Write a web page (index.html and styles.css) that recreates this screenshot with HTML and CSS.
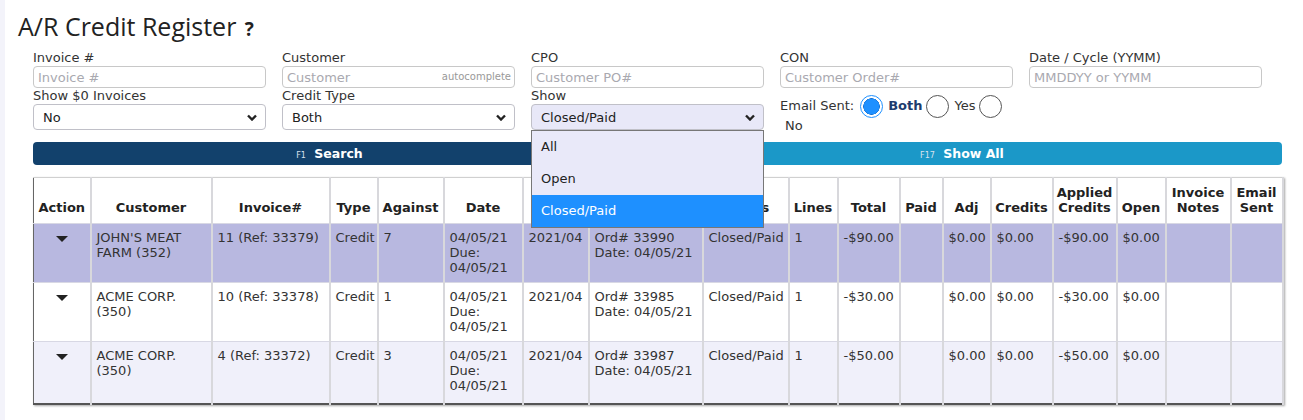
FILE: index.html
```html
<!DOCTYPE html>
<html lang="en">
<head>
    <meta charset="UTF-8">
    <title>A/R Credit Register</title>
    <link rel="stylesheet" href="styles.css">
</head>
<body>
    <div class="page">
        <h1 class="title">A/R Credit Register <span class="help">?</span></h1>

        <!-- filters -->
        <div class="filters">
            <div class="field">
                <label>Invoice #</label>
                <input class="input" placeholder="Invoice #">
            </div>
            <div class="field">
                <label>Customer</label>
                <div class="input-wrap">
                    <input class="input" placeholder="Customer">
                    <span class="hint">autocomplete</span>
                </div>
            </div>
            <div class="field">
                <label>CPO</label>
                <input class="input" placeholder="Customer PO#">
            </div>
            <div class="field">
                <label>CON</label>
                <input class="input" placeholder="Customer Order#">
            </div>
            <div class="field">
                <label>Date / Cycle (YYMM)</label>
                <input class="input" placeholder="MMDDYY or YYMM">
            </div>

            <div class="field">
                <label>Show $0 Invoices</label>
                <div class="select"><span>No</span><svg class="chev" viewBox="0 0 10 7"><path d="M1 1.5 L5 5.5 L9 1.5"/></svg></div>
            </div>
            <div class="field">
                <label>Credit Type</label>
                <div class="select"><span>Both</span><svg class="chev" viewBox="0 0 10 7"><path d="M1 1.5 L5 5.5 L9 1.5"/></svg></div>
            </div>
            <div class="field">
                <label>Show</label>
                <div class="select-wrap">
                    <div class="select active"><span>Closed/Paid</span><svg class="chev" viewBox="0 0 10 7"><path d="M1 1.5 L5 5.5 L9 1.5"/></svg></div>
                    <ul class="options">
                        <li>All</li>
                        <li>Open</li>
                        <li class="picked">Closed/Paid</li>
                    </ul>
                </div>
            </div>
            <div class="field email">
                <span class="email-label">Email Sent:</span><span class="radio on"></span><span class="opt bold">Both</span><span class="radio"></span><span class="opt">Yes</span><span class="radio"></span> <span class="opt">No</span>
            </div>
        </div>

        <div class="buttons">
            <button class="btn search"><small>F1</small> Search</button>
            <button class="btn showall"><small>F17</small> Show All</button>
        </div>

        <!-- results -->
        <table class="grid">
            <colgroup>
                <col class="w57"><col class="w121"><col class="w118"><col class="w48"><col class="w66"><col class="w79"><col class="w66"><col class="w114"><col class="w86">
                <col class="w49"><col class="w62"><col class="w43"><col class="w48"><col class="w62"><col class="w64"><col class="w49"><col class="w65"><col class="w52">
            </colgroup>
            <thead>
                <tr>
                    <th>Action</th><th>Customer</th><th>Invoice#</th><th>Type</th><th>Against</th><th>Date</th><th>Cycle</th><th>Order</th><th>Status</th>
                    <th>Lines</th><th>Total</th><th>Paid</th><th>Adj</th><th>Credits</th><th>Applied<br>Credits</th><th>Open</th><th>Invoice<br>Notes</th><th>Email<br>Sent</th>
                </tr>
            </thead>
            <tbody>
                <tr class="row-hl">
                    <td class="act"><span class="caret"></span></td>
                    <td>JOHN'S MEAT<br>FARM (352)</td>
                    <td>11 (Ref: 33379)</td>
                    <td>Credit</td>
                    <td>7</td>
                    <td>04/05/21<br>Due:<br>04/05/21</td>
                    <td>2021/04</td>
                    <td>Ord# 33990<br>Date: 04/05/21</td>
                    <td>Closed/Paid</td>
                    <td>1</td>
                    <td>-$90.00</td>
                    <td></td>
                    <td>$0.00</td>
                    <td>$0.00</td>
                    <td>-$90.00</td>
                    <td>$0.00</td>
                    <td></td>
                    <td></td>
                </tr>
                <tr>
                    <td class="act"><span class="caret"></span></td>
                    <td>ACME CORP.<br>(350)</td>
                    <td>10 (Ref: 33378)</td>
                    <td>Credit</td>
                    <td>1</td>
                    <td>04/05/21<br>Due:<br>04/05/21</td>
                    <td>2021/04</td>
                    <td>Ord# 33985<br>Date: 04/05/21</td>
                    <td>Closed/Paid</td>
                    <td>1</td>
                    <td>-$30.00</td>
                    <td></td>
                    <td>$0.00</td>
                    <td>$0.00</td>
                    <td>-$30.00</td>
                    <td>$0.00</td>
                    <td></td>
                    <td></td>
                </tr>
                <tr class="row-alt">
                    <td class="act"><span class="caret"></span></td>
                    <td>ACME CORP.<br>(350)</td>
                    <td>4 (Ref: 33372)</td>
                    <td>Credit</td>
                    <td>3</td>
                    <td>04/05/21<br>Due:<br>04/05/21</td>
                    <td>2021/04</td>
                    <td>Ord# 33987<br>Date: 04/05/21</td>
                    <td>Closed/Paid</td>
                    <td>1</td>
                    <td>-$50.00</td>
                    <td></td>
                    <td>$0.00</td>
                    <td>$0.00</td>
                    <td>-$50.00</td>
                    <td>$0.00</td>
                    <td></td>
                    <td></td>
                </tr>
            </tbody>
        </table>
    </div>
</body>
</html>
```

FILE: styles.css
```css
body {
    margin: 0;
    background: #f3f3fa;
    font-family: "DejaVu Sans", Verdana, sans-serif;
    font-size: 13px;
    color: #333;
}
.page {
    margin-left: 5px;
    background: #fff;
    min-height: 420px;
    padding: 11px 0 0 13px;
    box-sizing: border-box;
}
.title {
    font-family: "Open Sans", "Noto Sans", sans-serif;
    font-weight: 400;
    font-size: 25px;
    line-height: 31px;
    margin: 0 0 5px 0;
    color: #222;
}
.help {
    font-size: 19px;
    font-weight: 700;
    margin-left: 2px;
}

/* filters */
.filters {
    margin-left: 15px;
    width: 1229px;
    display: grid;
    grid-template-columns: repeat(5, 233px);
    column-gap: 16px;
}
.field label {
    display: block;
    line-height: 16px;
    height: 16px;
}
.input {
    display: block;
    width: 233px;
    height: 22px;
    box-sizing: border-box;
    border: 1px solid #c8c8c8;
    border-radius: 4px;
    padding: 0 4px;
    font-family: "DejaVu Sans", Verdana, sans-serif;
    font-size: 13px;
    color: #333;
    margin: 0;
}
.input::placeholder {
    color: #a9a9b0;
}
.input-wrap {
    position: relative;
}
.hint {
    position: absolute;
    right: 4px;
    top: 5px;
    font-size: 10px;
    color: #999;
}
.select {
    height: 26px;
    box-sizing: border-box;
    border: 1px solid #c0c0c8;
    border-radius: 4px;
    display: flex;
    align-items: center;
    justify-content: space-between;
    padding: 0 8px 0 9px;
    background: #fff;
    color: #222;
}
.select.active {
    background: #e8e8f8;
}
.chev {
    width: 10px;
    height: 7px;
}
.chev path {
    fill: none;
    stroke: #222;
    stroke-width: 2.4;
}
.select-wrap {
    position: relative;
}
.options {
    position: absolute;
    left: 0;
    top: 26px;
    width: 233px;
    box-sizing: border-box;
    margin: 0;
    padding: 0;
    list-style: none;
    background: #e9e9f9;
    border: 1px solid #777;
    z-index: 10;
}
.options li {
    height: 32px;
    line-height: 32px;
    padding-left: 9px;
    color: #222;
}
.options li.picked {
    background: #1e90ff;
    color: #fff;
}
.email {
    padding-top: 7px;
    line-height: 15px;
}
.email-label {
    margin-right: 6px;
}
.radio {
    display: inline-block;
    width: 23px;
    height: 23px;
    box-sizing: border-box;
    border: 1px solid #555;
    border-radius: 50%;
    vertical-align: middle;
    background: #fff;
}
.radio.on {
    border: 1.5px solid #1e90ff;
    background: radial-gradient(circle, #1e90ff 0, #1e90ff 7.5px, #1570d0 8px, #fff 8.5px);
}
.opt {
    margin: 0 4px 0 5px;
}
.opt.bold {
    font-weight: 700;
    color: #1d3c6e;
}

/* buttons */
.buttons {
    margin: 9px 0 0 15px;
    width: 1249px;
    display: flex;
    gap: 16px;
}
.btn {
    height: 23px;
    border: none;
    border-radius: 4px;
    color: #fff;
    font-family: "DejaVu Sans", Verdana, sans-serif;
    font-size: 12.5px;
    font-weight: 700;
    padding: 0;
}
.btn small {
    font-size: 8px;
    font-weight: 400;
    color: #d8e2ee;
    margin-right: 4px;
}
.search {
    width: 593px;
    background: #12416c;
}
.showall {
    flex: 1;
    background: #1b98c8;
}

/* table */
.grid {
    margin: 12px 0 0 15px;
    width: 1249px;
    table-layout: fixed;
    border-collapse: collapse;
    border-top: 1px solid #d0d0d0;
    border-left: 1px solid #666;
    border-right: 1px solid #666;
    border-bottom: 2px solid #555;
    box-shadow: 1px 1px 2px rgba(0, 0, 0, 0.35);
}
.grid th,
.grid td {
    border-left: 2px solid #d8d8dc;
    border-right: 2px solid #d8d8dc;
    line-height: 15px;
    overflow: hidden;
}
.grid th {
    background: #fff;
    font-weight: 700;
    color: #222;
    text-align: center;
    vertical-align: bottom;
    padding: 7px 3px 8px;
}
.grid td {
    vertical-align: top;
    padding: 6px 5px 7px;
    white-space: nowrap;
    border-top: 1px solid #d8d8e4;
    height: 45px;
}
.grid tr:last-child td {
    padding-bottom: 10px;
}
.grid th:first-child,
.grid td:first-child {
    border-left: none;
}
.row-hl td {
    background: #b8b8e0;
}
.row-alt td {
    background: #f0f0fa;
}
.act {
    text-align: center;
}
.caret {
    display: inline-block;
    margin-top: 6px;
    width: 0;
    height: 0;
    border-left: 6px solid transparent;
    border-right: 6px solid transparent;
    border-top: 6px solid #222;
}
.w57 { width: 57px; }
.w121 { width: 121px; }
.w118 { width: 118px; }
.w48 { width: 48px; }
.w66 { width: 66px; }
.w79 { width: 79px; }
.w114 { width: 114px; }
.w86 { width: 86px; }
.w49 { width: 49px; }
.w62 { width: 62px; }
.w43 { width: 43px; }
.w64 { width: 64px; }
.w65 { width: 65px; }
.w52 { width: 52px; }
```
